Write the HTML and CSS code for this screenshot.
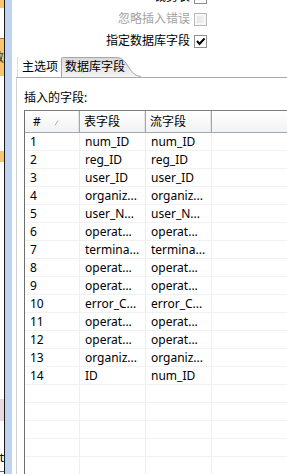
FILE: index.html
```
<!DOCTYPE html>
<html>
<head>
<meta charset="utf-8">
<title>插入的字段</title>
<link rel="stylesheet" href="styles.css">
</head>
<body>
<div class="window">
    <div class="strip">
        <div class="blk orange" style="height:8px"></div>
        <div class="blk white" style="height:30px"></div>
        <div class="blk orange edge" style="height:37px"><span>数</span></div>
        <div class="blk white" style="height:75px"></div>
        <div class="blk orange" style="height:11px"></div>
        <div class="blk white" style="height:237px"></div>
        <div class="blk pink" style="height:22px"></div>
        <div class="blk white" style="height:30px"></div>
        <div class="blk txt">it</div>
    </div>
    <div class="rule"></div>
    <div class="bluebar"></div>
    <div class="main">
        <div class="opts">
            <div class="opt"><label>裁剪表</label><span class="chk"></span></div>
            <div class="opt off"><label>忽略插入错误</label><span class="chk dis"></span></div>
            <div class="opt"><label>指定数据库字段</label><span class="chk on"><svg width="11" height="11" viewBox="0 0 11 11"><path d="M2 5 L4.5 8 L9.5 2.5" fill="none" stroke="#000" stroke-width="2"/></svg></span></div>
        </div>
        <div class="tabs">
            <div class="tab">主选项</div>
            <div class="tab sel">
                <svg class="tabshape" width="80" height="20" viewBox="0 0 80 20">
                    <defs><linearGradient id="g" x1="0" y1="0" x2="0" y2="1"><stop offset="0" stop-color="#d9d9d9"/><stop offset="1" stop-color="#f3f3f3"/></linearGradient></defs>
                    <path d="M0.5 20 V1.5 Q0.5 0.5 1.5 0.5 H56 C67 0.5 68 19.5 80 19.5" fill="url(#g)" stroke="#a6a6a6"/>
                </svg>
                <span>数据库字段</span>
            </div>
        </div>
        <div class="panel">
            <div class="caption">插入的字段:</div>
            <div class="grid">
                <div class="row head">
                    <div class="c first">#<svg class="sort" width="5" height="6" viewBox="0 0 5 6"><path d="M1 5.5 L4 0.5" stroke="#aaa"/></svg></div>
                    <div class="c">表字段</div>
                    <div class="c">流字段</div>
                    <div class="c"></div>
                </div>
                <div class="row"><div class="c">1</div><div class="c">num_ID</div><div class="c">num_ID</div><div class="c"></div></div>
                <div class="row"><div class="c">2</div><div class="c">reg_ID</div><div class="c">reg_ID</div><div class="c"></div></div>
                <div class="row"><div class="c">3</div><div class="c">user_ID</div><div class="c">user_ID</div><div class="c"></div></div>
                <div class="row"><div class="c">4</div><div class="c">organiz...</div><div class="c">organiz...</div><div class="c"></div></div>
                <div class="row"><div class="c">5</div><div class="c">user_N...</div><div class="c">user_N...</div><div class="c"></div></div>
                <div class="row"><div class="c">6</div><div class="c">operat...</div><div class="c">operat...</div><div class="c"></div></div>
                <div class="row"><div class="c">7</div><div class="c">termina...</div><div class="c">termina...</div><div class="c"></div></div>
                <div class="row"><div class="c">8</div><div class="c">operat...</div><div class="c">operat...</div><div class="c"></div></div>
                <div class="row"><div class="c">9</div><div class="c">operat...</div><div class="c">operat...</div><div class="c"></div></div>
                <div class="row"><div class="c">10</div><div class="c">error_C...</div><div class="c">error_C...</div><div class="c"></div></div>
                <div class="row"><div class="c">11</div><div class="c">operat...</div><div class="c">operat...</div><div class="c"></div></div>
                <div class="row"><div class="c">12</div><div class="c">operat...</div><div class="c">operat...</div><div class="c"></div></div>
                <div class="row"><div class="c">13</div><div class="c">organiz...</div><div class="c">organiz...</div><div class="c"></div></div>
                <div class="row"><div class="c">14</div><div class="c">ID</div><div class="c">num_ID</div><div class="c"></div></div>
                <div class="row"><div class="c"></div><div class="c"></div><div class="c"></div><div class="c"></div></div>
                <div class="row"><div class="c"></div><div class="c"></div><div class="c"></div><div class="c"></div></div>
                <div class="row"><div class="c"></div><div class="c"></div><div class="c"></div><div class="c"></div></div>
                <div class="row"><div class="c"></div><div class="c"></div><div class="c"></div><div class="c"></div></div>
                <div class="row"><div class="c"></div><div class="c"></div><div class="c"></div><div class="c"></div></div>
            </div>
        </div>
    </div>
</div>
</body>
</html>
```

FILE: styles.css
```
body{
    margin:0;
    background:#fff;
    font-family:"Noto Sans","Noto Sans CJK SC",sans-serif;
    font-size:12px;
    color:#000;
}
.window{
    display:flex;
    width:287px;
    height:474px;
    overflow:hidden;
}
.strip{
    width:4px;
    display:flex;
    flex-direction:column;
    flex:none;
}
.blk{
    flex:none;
    overflow:hidden;
}
.orange{
    background:#f8c46c;
}
.edge{
    border-top:1px solid #9a7a40;
    font-size:12px;
    line-height:37px;
    direction:rtl;
    color:#333;
}
.white{
    background:#fff;
}
.pink{
    background:#ead9dd;
}
.txt{
    height:20px;
    line-height:14px;
    direction:rtl;
    font-size:12px;
    border-bottom:1px solid #666;
}
.rule{
    width:1px;
    background:#1a1a1a;
    flex:none;
}
.bluebar{
    width:7px;
    background:#bdd3ef;
    flex:none;
}
.main{
    flex:1;
    display:flex;
    flex-direction:column;
    padding-left:4px;
}
.opts{
    display:flex;
    flex-direction:column;
    align-items:flex-end;
    margin-top:-14px;
    padding-right:80px;
}
.opt{
    height:22px;
    display:flex;
    align-items:center;
    gap:4px;
}
.opt label{
    line-height:14px;
}
.opt.off label{
    color:#a3a3a3;
}
.chk{
    width:11px;
    height:11px;
    border:1px solid #8e8f8f;
    background:linear-gradient(#f0f0f0,#fdfdfd);
    display:flex;
    align-items:center;
    justify-content:center;
}
.chk.dis{
    border-color:#b8b8b8;
    background:linear-gradient(90deg,#e4e4e4,#f4f4f4);
    box-shadow:inset 0 0 0 2px #f7f7f7;
}
.chk.on{
    background:#fff;
}
.tabs{
    display:flex;
    margin-top:5px;
    height:20px;
    padding-left:1px;
}
.tab{
    height:20px;
    line-height:20px;
    padding:0 3px 0 4px;
    background:#fff;
    border-left:1px solid #dcdcdc;
    box-sizing:border-box;
}
.tab.sel{
    position:relative;
    width:80px;
    border-left:none;
    padding-left:4px;
    background:none;
}
.tab.sel span{
    position:relative;
}
.tabshape{
    position:absolute;
    left:0;
    top:0;
}
.panel{
    flex:1;
    border-top:1px solid #a9a9a9;
    border-left:1px solid #d2d2d2;
    padding:13px 0 0 7px;
}
.caption{
    line-height:14px;
    height:14px;
    margin-bottom:5px;
}
.grid{
    border-top:1px solid #7e7e7e;
    border-left:1px solid #6e6e6e;
    margin-right:-40px;
}
.row{
    display:grid;
    grid-template-columns:55px 66px 66px 1fr;
    height:18px;
}
.c{
    border-right:1px solid #efefef;
    border-bottom:1px solid #f1f1f1;
    padding-left:5px;
    line-height:17px;
    white-space:nowrap;
    overflow:hidden;
}
.row.head{
    height:22px;
}
.head .c{
    background:linear-gradient(#ffffff,#f1f2f4);
    border-right:1px solid #a5a5a5;
    border-bottom:1px solid #a8a8a8;
    box-shadow:inset -1px 0 0 #e6e6e6;
    line-height:21px;
    padding-left:4px;
}
.head .c.first{
    padding-left:8px;
}
.sort{
    margin-left:13px;
}
```
